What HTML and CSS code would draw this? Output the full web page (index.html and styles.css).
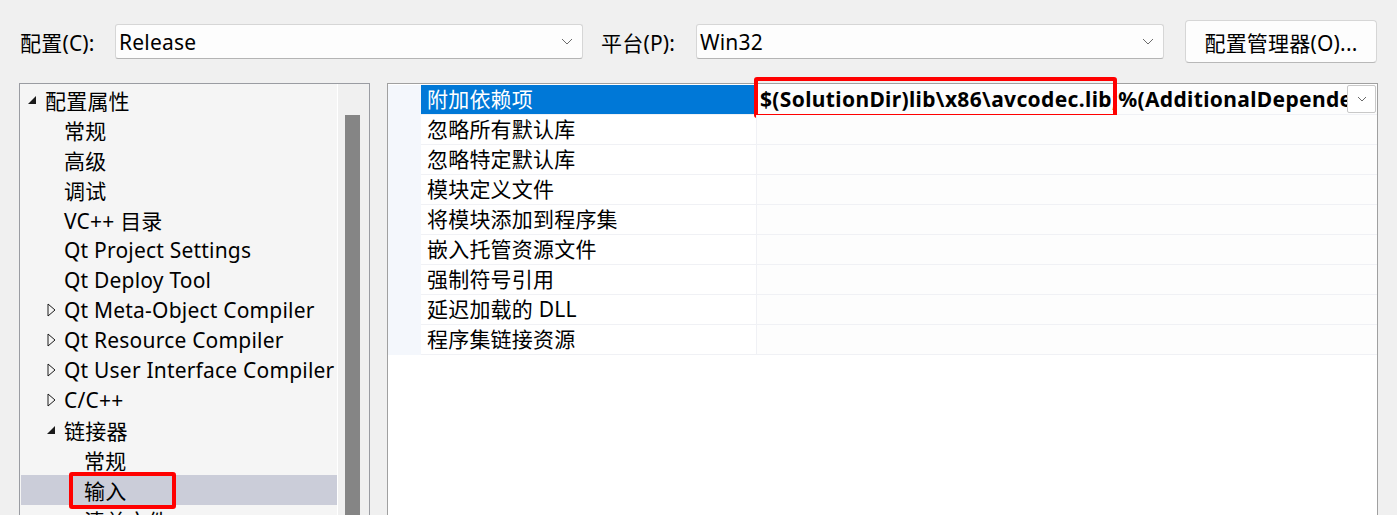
FILE: index.html
```html
<!DOCTYPE html>
<html lang="zh-CN">
<head>
    <meta charset="UTF-8">
    <title>属性页 - 链接器 - 输入</title>
    <link rel="stylesheet" href="styles.css">
</head>
<body>
    <div class="toolbar">
        <span class="field-label">配置(C):</span>
        <div class="combo">
            <span class="combo-text">Release</span>
            <svg class="chevron" width="12" height="7" viewBox="0 0 12 7"><path d="M1 1 L6 6 L11 1" fill="none" stroke="#6b6b6b" stroke-width="1"/></svg>
        </div>
        <span class="field-label field-label-platform">平台(P):</span>
        <div class="combo">
            <span class="combo-text">Win32</span>
            <svg class="chevron" width="12" height="7" viewBox="0 0 12 7"><path d="M1 1 L6 6 L11 1" fill="none" stroke="#6b6b6b" stroke-width="1"/></svg>
        </div>
        <button class="manager-btn">配置管理器(O)...</button>
    </div>

    <div class="workspace">
        <div class="tree-panel">
            <ul class="tree">
                <li class="tree-row level-0"><span class="toggle"><svg width="9" height="9" viewBox="0 0 9 9"><polygon points="8,0 8,8 0,8" fill="#1a1a1a"/></svg></span>配置属性</li>
                <li class="tree-row level-1"><span class="toggle"></span>常规</li>
                <li class="tree-row level-1"><span class="toggle"></span>高级</li>
                <li class="tree-row level-1"><span class="toggle"></span>调试</li>
                <li class="tree-row level-1"><span class="toggle"></span>VC++ 目录</li>
                <li class="tree-row level-1"><span class="toggle"></span>Qt Project Settings</li>
                <li class="tree-row level-1"><span class="toggle"></span>Qt Deploy Tool</li>
                <li class="tree-row level-1"><span class="toggle"><svg width="9" height="14" viewBox="0 0 9 14"><polygon points="1,1 8,7 1,13" fill="none" stroke="#1a1a1a" stroke-width="1"/></svg></span>Qt Meta-Object Compiler</li>
                <li class="tree-row level-1"><span class="toggle"><svg width="9" height="14" viewBox="0 0 9 14"><polygon points="1,1 8,7 1,13" fill="none" stroke="#1a1a1a" stroke-width="1"/></svg></span>Qt Resource Compiler</li>
                <li class="tree-row level-1"><span class="toggle"><svg width="9" height="14" viewBox="0 0 9 14"><polygon points="1,1 8,7 1,13" fill="none" stroke="#1a1a1a" stroke-width="1"/></svg></span>Qt User Interface Compiler</li>
                <li class="tree-row level-1"><span class="toggle"><svg width="9" height="14" viewBox="0 0 9 14"><polygon points="1,1 8,7 1,13" fill="none" stroke="#1a1a1a" stroke-width="1"/></svg></span>C/C++</li>
                <li class="tree-row level-1"><span class="toggle"><svg width="9" height="9" viewBox="0 0 9 9"><polygon points="8,0 8,8 0,8" fill="#1a1a1a"/></svg></span>链接器</li>
                <li class="tree-row level-2"><span class="toggle"></span>常规</li>
                <li class="tree-row level-2 selected"><span class="toggle"></span>输入<span class="mark mark-tree"></span></li>
                <li class="tree-row level-2"><span class="toggle"></span>清单文件</li>
            </ul>
            <div class="scrollbar"><div class="scroll-thumb"></div></div>
        </div>

        <div class="grid-panel">
            <div class="grid-row">
                <div class="gutter"></div>
                <div class="prop-name selected">附加依赖项</div>
                <div class="prop-value">
                    <span class="value-text">$(SolutionDir)lib\x86\avcodec.lib;%(AdditionalDependencies)</span>
                    <span class="value-drop"><svg width="10" height="6" viewBox="0 0 10 6"><path d="M1 1 L5 5 L9 1" fill="none" stroke="#6b6b6b" stroke-width="1"/></svg></span>
                    <span class="mark mark-value"></span>
                </div>
            </div>
            <div class="grid-row"><div class="gutter"></div><div class="prop-name">忽略所有默认库</div><div class="prop-value"></div></div>
            <div class="grid-row"><div class="gutter"></div><div class="prop-name">忽略特定默认库</div><div class="prop-value"></div></div>
            <div class="grid-row"><div class="gutter"></div><div class="prop-name">模块定义文件</div><div class="prop-value"></div></div>
            <div class="grid-row"><div class="gutter"></div><div class="prop-name">将模块添加到程序集</div><div class="prop-value"></div></div>
            <div class="grid-row"><div class="gutter"></div><div class="prop-name">嵌入托管资源文件</div><div class="prop-value"></div></div>
            <div class="grid-row"><div class="gutter"></div><div class="prop-name">强制符号引用</div><div class="prop-value"></div></div>
            <div class="grid-row"><div class="gutter"></div><div class="prop-name">延迟加载的 DLL</div><div class="prop-value"></div></div>
            <div class="grid-row"><div class="gutter"></div><div class="prop-name">程序集链接资源</div><div class="prop-value"></div></div>
        </div>
    </div>
</body>
</html>
```

FILE: styles.css
```css
body {
    font-family: "Noto Sans", "Noto Sans CJK SC", sans-serif;
    font-size: 21px;
    letter-spacing: 0.2px;
    color: #000;
    background: #f0f0f0;
    margin: 0;
    overflow: hidden;
    height: 515px;
}
.toolbar {
    display: flex;
    align-items: center;
    height: 83px;
    padding-left: 20px;
}
.field-label {
    width: 95px;
    white-space: nowrap;
}
.field-label-platform {
    margin-left: 18px;
}
.combo {
    display: flex;
    align-items: center;
    justify-content: space-between;
    box-sizing: border-box;
    width: 468px;
    height: 35px;
    padding: 0 9px 0 3px;
    background: #fdfdfd;
    border: 1px solid #d6d6d6;
    border-bottom-color: #b4b4b4;
    border-radius: 3px;
}
.manager-btn {
    box-sizing: border-box;
    width: 192px;
    height: 43px;
    margin-left: 21px;
    padding: 0;
    font-family: inherit;
    font-size: 21px;
    letter-spacing: 0.2px;
    color: #000;
    background: #fdfdfd;
    border: 1px solid #d6d6d6;
    border-bottom-color: #b8b8b8;
    border-radius: 4px;
    white-space: nowrap;
}
.workspace {
    display: flex;
    gap: 17px;
    padding-left: 19px;
}
.tree-panel {
    display: flex;
    width: 351px;
    height: 432px;
    box-sizing: border-box;
    border: 1px solid #9a9ca2;
    border-bottom: none;
    background: #f5f5f5;
    overflow: hidden;
}
.tree {
    list-style: none;
    margin: 0;
    padding: 1px 0 0 1px;
    flex: 1;
    min-width: 0;
}
.tree-row {
    position: relative;
    display: flex;
    align-items: center;
    height: 30px;
    white-space: nowrap;
}
.tree-row.level-0 { padding-left: 5px; }
.tree-row.level-1 { padding-left: 24px; }
.tree-row.level-2 { padding-left: 44px; }
.tree-row.selected {
    background: #cbcdd9;
}
.toggle {
    display: flex;
    align-items: center;
    flex: none;
    width: 19px;
    height: 30px;
    padding-left: 2px;
    box-sizing: border-box;
}
.scrollbar {
    flex: none;
    width: 31px;
    background: #f0f0f0;
    border-left: 1px solid #fff;
}
.scroll-thumb {
    margin: 31px 0 0 7px;
    width: 15px;
    height: 420px;
    background: #858585;
}
.grid-panel {
    width: 991px;
    height: 432px;
    box-sizing: border-box;
    border: 1px solid #a0a0a0;
    border-bottom: none;
    background: #fff;
    padding-top: 1px;
}
.grid-row {
    display: flex;
    height: 30px;
}
.gutter {
    width: 33px;
    background: #f4f7fc;
}
.prop-name {
    width: 335px;
    box-sizing: border-box;
    padding-left: 6px;
    line-height: 29px;
    border-bottom: 1px solid #f0f1f5;
    white-space: nowrap;
}
.prop-name.selected {
    background: #0078d7;
    color: #fff;
}
.prop-value {
    position: relative;
    display: flex;
    flex: 1;
    min-width: 0;
    border-left: 1px solid #f0f1f5;
    border-bottom: 1px solid #f0f1f5;
    background: #fdfdfd;
}
.value-text {
    flex: 1;
    overflow: hidden;
    white-space: nowrap;
    padding-left: 3px;
    line-height: 29px;
    font-weight: bold;
    letter-spacing: 0.35px;
}
.value-drop {
    display: flex;
    align-items: center;
    justify-content: center;
    width: 29px;
    height: 28px;
    margin-right: 1px;
    box-sizing: border-box;
    background: #fff;
    border: 1px solid #c8c8c8;
    border-radius: 2px;
}
/* red annotation frames drawn over the screenshot */
.mark {
    position: absolute;
    box-sizing: border-box;
    border: 4px solid #f00;
    border-radius: 3px;
}
.mark-value {
    left: -3px;
    top: -8px;
    width: 363px;
    height: 41px;
}
.mark-tree {
    left: 48px;
    top: -3px;
    width: 107px;
    height: 37px;
}
```
